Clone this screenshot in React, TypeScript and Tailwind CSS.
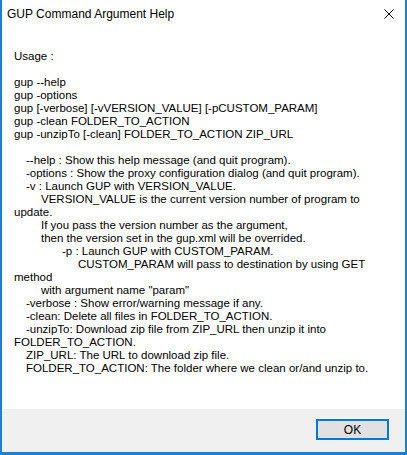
const ACCENT = "#1a7fd6";

type Line = { text: string; indent: number };

const lines: Line[] = [
  { text: "Usage :", indent: 0 },
  { text: "", indent: 0 },
  { text: "gup --help", indent: 0 },
  { text: "gup -options", indent: 0 },
  { text: "gup [-verbose] [-vVERSION_VALUE] [-pCUSTOM_PARAM]", indent: 0 },
  { text: "gup -clean FOLDER_TO_ACTION", indent: 0 },
  { text: "gup -unzipTo [-clean] FOLDER_TO_ACTION ZIP_URL", indent: 0 },
  { text: "", indent: 0 },
  { text: "--help : Show this help message (and quit program).", indent: 12 },
  { text: "-options : Show the proxy configuration dialog (and quit program).", indent: 12 },
  { text: "-v : Launch GUP with VERSION_VALUE.", indent: 12 },
  { text: "VERSION_VALUE is the current version number of program to", indent: 27 },
  { text: "update.", indent: 0 },
  { text: "If you pass the version number as the argument,", indent: 27 },
  { text: "then the version set in the gup.xml will be overrided.", indent: 27 },
  { text: "-p : Launch GUP with CUSTOM_PARAM.", indent: 48 },
  { text: "CUSTOM_PARAM will pass to destination by using GET", indent: 64 },
  { text: "method", indent: 0 },
  { text: 'with argument name "param"', indent: 27 },
  { text: "-verbose : Show error/warning message if any.", indent: 12 },
  { text: "-clean: Delete all files in FOLDER_TO_ACTION.", indent: 12 },
  { text: "-unzipTo: Download zip file from ZIP_URL then unzip it into", indent: 12 },
  { text: "FOLDER_TO_ACTION.", indent: 0 },
  { text: "ZIP_URL: The URL to download zip file.", indent: 12 },
  { text: "FOLDER_TO_ACTION: The folder where we clean or/and unzip to.", indent: 12 },
];

export default function App() {
  return (
    <div
      className="w-[407px] h-[455px] flex flex-col pl-[2px] pr-[2px] pb-[3px] text-black"
      style={{ background: ACCENT, fontFamily: '"Liberation Sans", Arial, sans-serif' }}
    >
      <div className="flex-1 flex flex-col bg-white">
        {/* title bar */}
        <div className="h-[27px] flex items-center justify-between pl-[5px] pr-[10px]">
          <span className="text-[12px] leading-none">GUP Command Argument Help</span>
          <svg width="10" height="10" viewBox="0 0 10 10" className="mr-[1px]">
            <path d="M0.5 0.5 L9.5 9.5 M9.5 0.5 L0.5 9.5" stroke="#000" strokeWidth="1" />
          </svg>
        </div>

        {/* message body */}
        <div className="flex-1 pt-[23px] pl-[12px]">
          {lines.map((l, i) => (
            <div
              key={i}
              className="h-[13px] text-[11.5px] leading-[13px] whitespace-pre"
              style={{ paddingLeft: l.indent }}
            >
              {l.text}
            </div>
          ))}
        </div>

        {/* footer */}
        <div className="h-[43px] bg-[#f0f0f0] flex items-start justify-end pt-[10px] pr-[16px]">
          <button
            type="button"
            className="w-[73px] h-[21px] border-2 border-[#0078d7] bg-[#e1e1e1] text-[12px] leading-none flex items-center justify-center"
          >
            OK
          </button>
        </div>
      </div>
    </div>
  );
}
